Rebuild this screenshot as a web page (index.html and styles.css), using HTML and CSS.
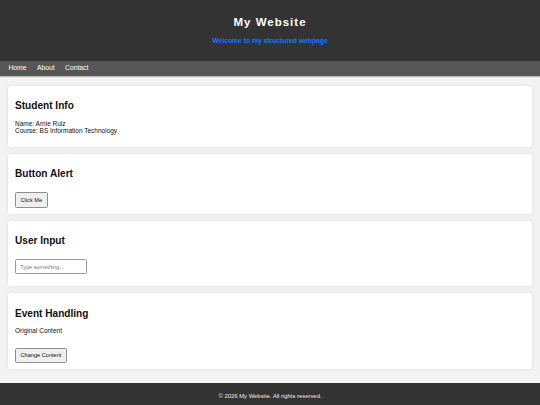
FILE: index.html
```html
<!DOCTYPE html>
<html lang="en">
<head>
    <meta charset="UTF-8">
    <meta name="viewport" content="width=device-width, initial-scale=1.0">
    <title>My Website</title>
    <link rel="stylesheet" href="styles.css">
</head>
<body>
    <header class="site-header">
        <h1>My Website</h1>
        <p class="tagline">Welcome to my structured webpage</p>
    </header>

    <nav class="site-nav">
        <a href="#">Home</a>
        <a href="#">About</a>
        <a href="#">Contact</a>
    </nav>

    <main class="content">
        <section class="card">
            <h2>Student Info</h2>
            <p>Name: Arnie Ruiz<br>Course: BS Information Technology</p>
        </section>

        <section class="card">
            <h2>Button Alert</h2>
            <button class="btn" id="alertBtn">Click Me</button>
        </section>

        <section class="card">
            <h2>User Input</h2>
            <input class="text-input" type="text" id="userInput" placeholder="Type something...">
            <p class="output" id="output"></p>
        </section>

        <section class="card">
            <h2>Event Handling</h2>
            <p class="status" id="status">Original Content</p>
            <button class="btn" id="changeBtn">Change Content</button>
        </section>
    </main>

    <footer class="site-footer">
        <p>&copy; 2026 My Website. All rights reserved.</p>
    </footer>
</body>
</html>
```

FILE: styles.css
```css
/* page base */
body {
  margin: 0;
  font-family: 'Liberation Sans', Arial, sans-serif;
  font-size: 6.75px;
  background: #f3f3f3;
  color: #111;
}

/* header */
.site-header {
  background: #333;
  color: #fff;
  text-align: center;
  padding: 16px 0 15.5px;
}

.site-header h1 {
  margin: 0 0 8px;
  font-size: 11.5px;
  letter-spacing: 1px;
  line-height: 13.2px;
}

.tagline {
  margin: 0;
  color: #1479ec;
  font-weight: bold;
  font-size: 6.75px;
  line-height: 7.8px;
}

/* nav bar */
.site-nav {
  display: flex;
  gap: 10.5px;
  background: #565656;
  padding: 3.9px 8.4px;
  line-height: 7.8px;
  box-shadow: 0 1px 1px rgba(0,0,0,0.25);
}

.site-nav a {
  color: #fff;
  text-decoration: none;
}

/* cards */
.content {
  padding: 9.5px 8.4px 7px;
}

.card {
  background: #fff;
  border-radius: 3.5px;
  box-shadow: 0 0 4px rgba(0,0,0,0.09);
  padding: 6px 6.6px;
  margin-bottom: 7px;
}

.card h2 {
  margin: 8.2px 0;
  font-size: 10.1px;
  line-height: 11.6px;
}

.card p {
  margin: 0 0 6.5px;
  font-size: 6.5px;
  line-height: 7.4px;
}

.card .output {
  margin: 0;
  height: 6.5px;
}

/* block margins collapse with the heading / text above */
.btn {
  display: block;
  margin-top: 12.8px;
  font-family: 'Liberation Sans', Arial, sans-serif;
  font-size: 5.6px;
  line-height: 6.5px;
  padding: 3.4px 4.6px;
  background: #efefef;
  color: #111;
  border: 1px solid #8f8f8f;
  border-radius: 1.5px;
}

.text-input {
  display: block;
  box-sizing: border-box;
  width: 72px;
  height: 14.6px;
  margin-top: 12.8px;
  padding: 3px 4px;
  font-family: 'Liberation Sans', Arial, sans-serif;
  font-size: 5.6px;
  border: 1px solid #9a9a9a;
  border-radius: 1.5px;
}

.text-input::placeholder {
  color: #7a7a7a;
}

/* footer */
.site-footer {
  background: #333;
  color: #eee;
  text-align: center;
  padding: 10.5px 0;
}

.site-footer p {
  margin: 0;
  font-size: 5.9px;
  line-height: 6.8px;
}
```
